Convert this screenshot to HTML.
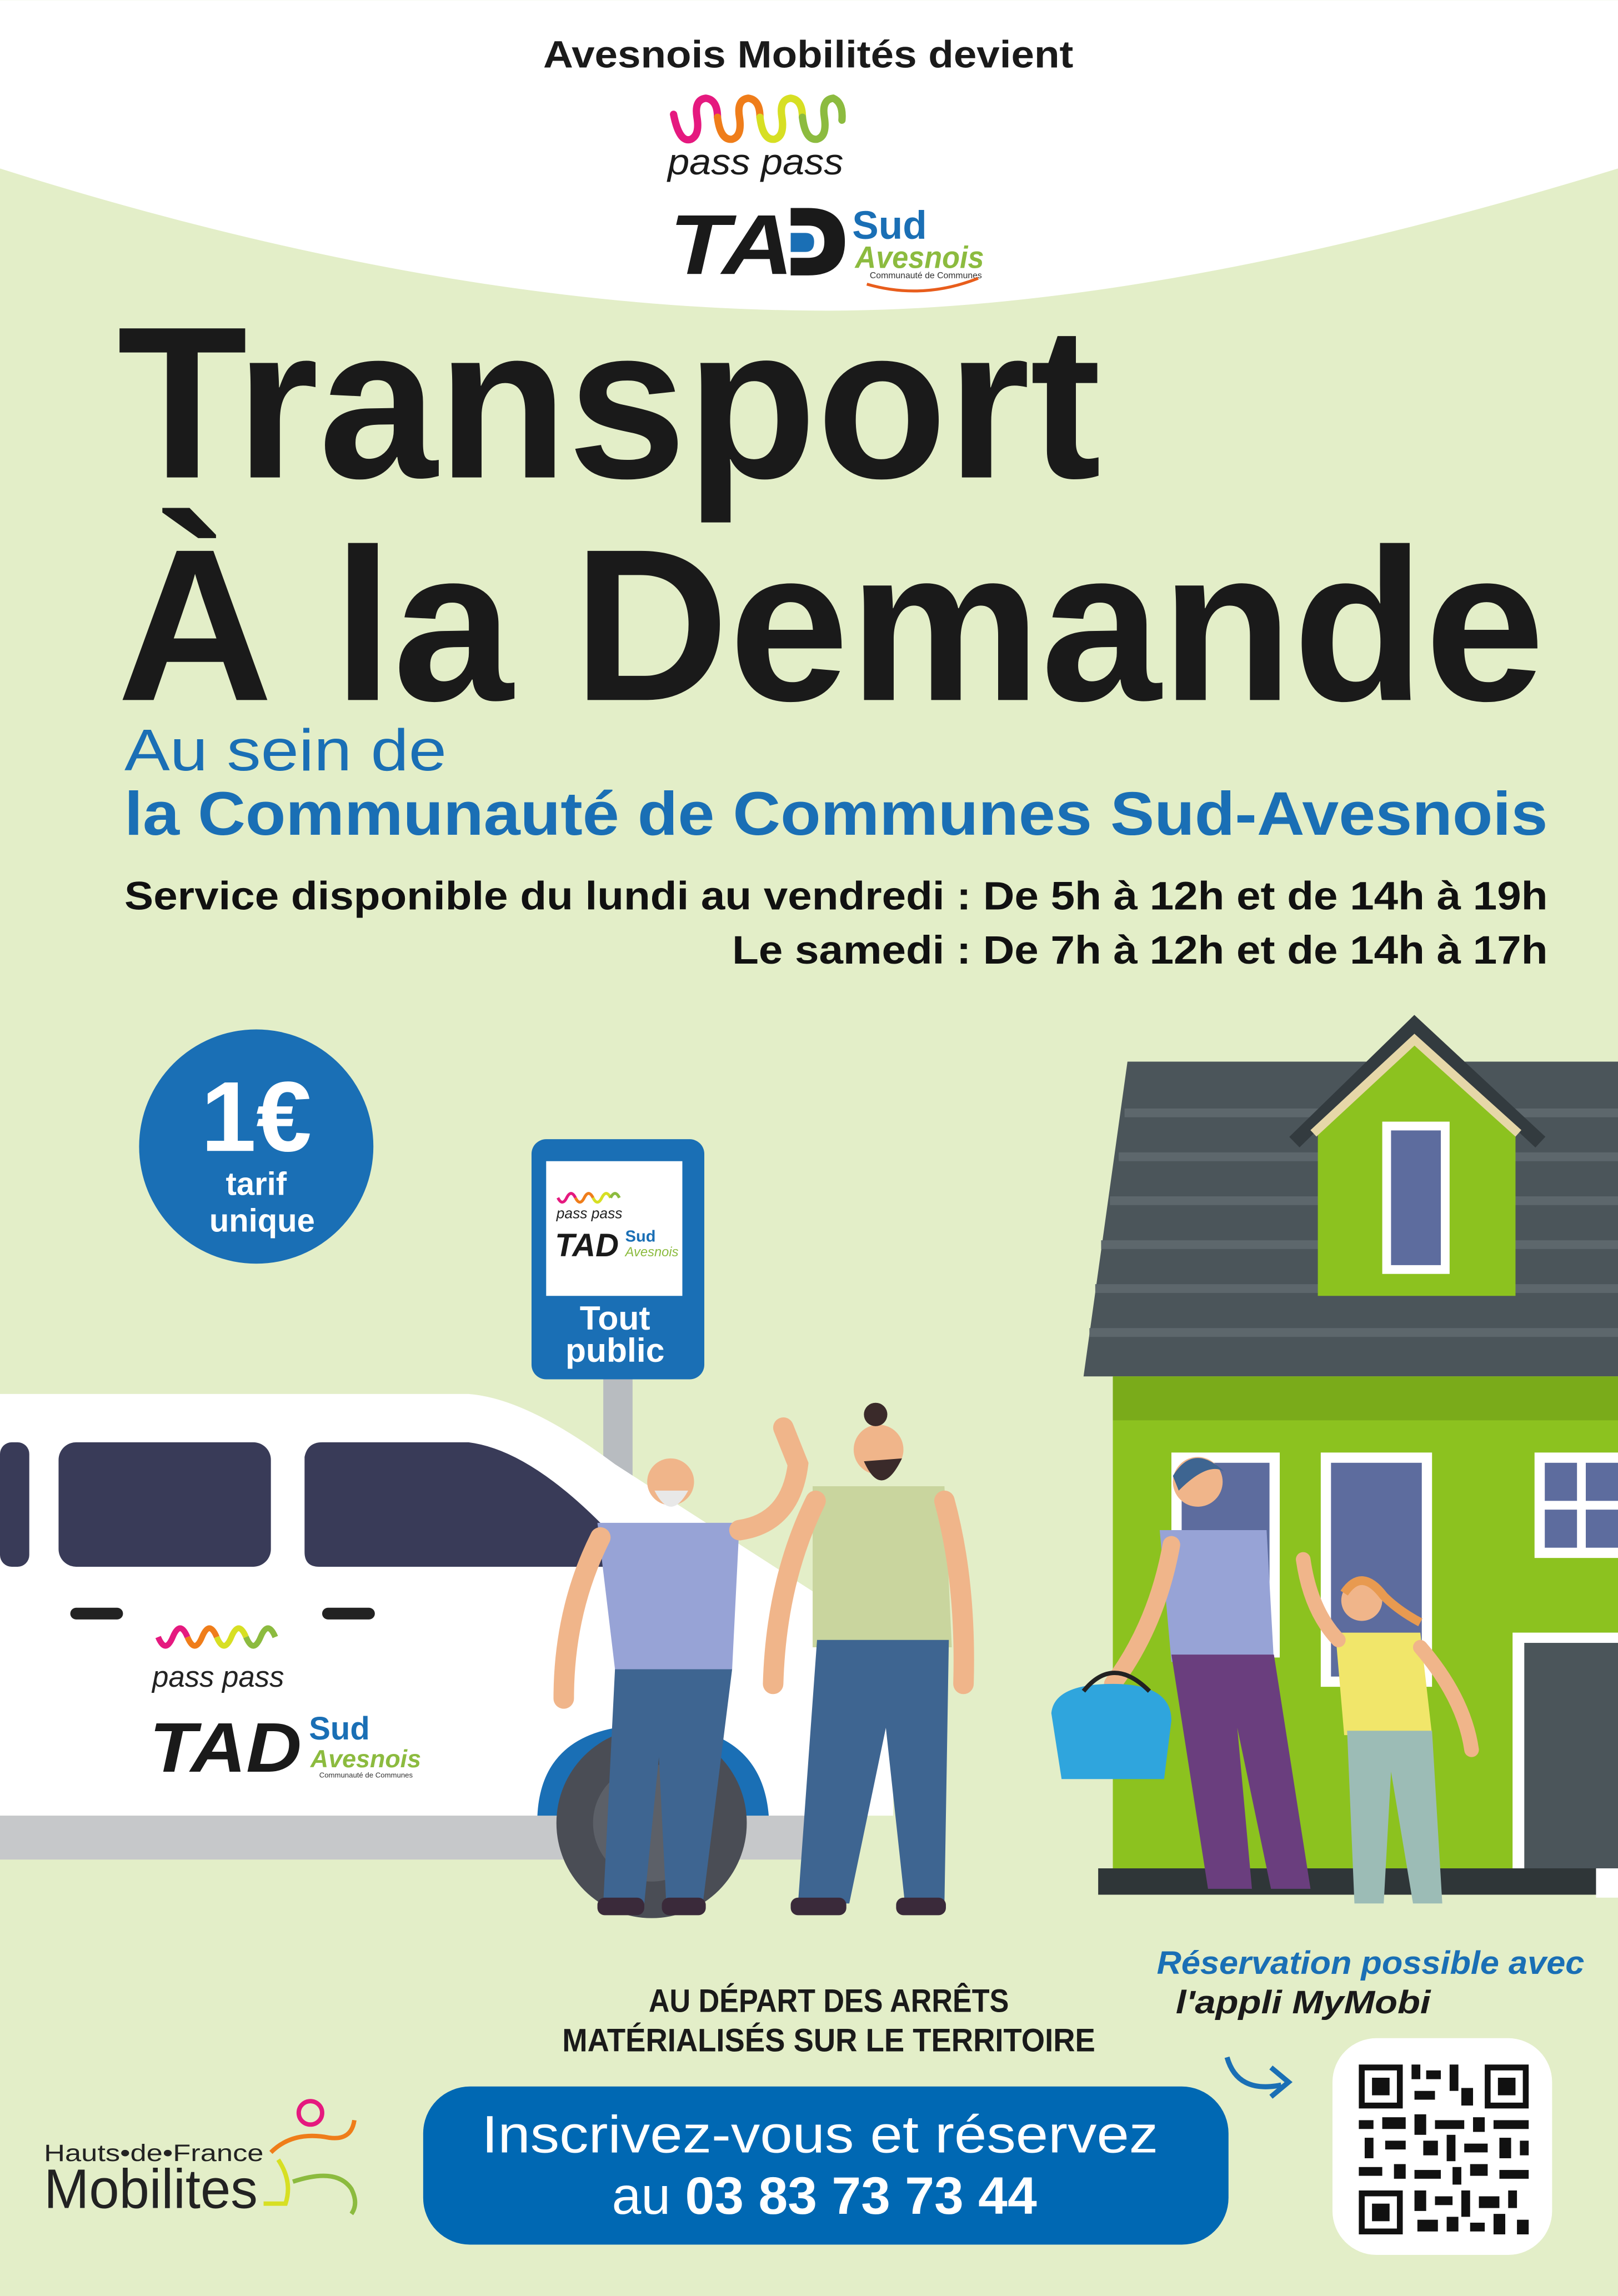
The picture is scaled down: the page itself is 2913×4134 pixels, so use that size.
<!DOCTYPE html>
<html><head><meta charset="utf-8">
<style>
html,body{margin:0;padding:0;background:#e3eec8;}
svg{display:block;}
text{font-family:"Liberation Sans",sans-serif;}
</style></head>
<body>
<svg width="2913" height="4134" viewBox="0 0 1105 1568" xmlns="http://www.w3.org/2000/svg">
<rect width="1105" height="1568" fill="#e3eec8"/>
<path d="M0 0H1105V115Q780 215 552 212Q300 210 0 115Z" fill="#fff"/>
<text x="552" y="46" font-size="26" font-weight="bold" text-anchor="middle" fill="#1a1a1a" textLength="362" lengthAdjust="spacingAndGlyphs">Avesnois Mobilités devient</text>
<g fill="none" stroke-width="5" stroke-linecap="round">
<path d="M460 78 Q464 98 472 95 Q478 92 476 80 Q474 68 482 67 Q490 68 490 80" stroke="#e5197f"/>
<path d="M490 80 Q492 96 500 95 Q507 93 505 80 Q503 68 511 67 Q519 68 519 80" stroke="#ef7d1a"/>
<path d="M519 80 Q521 96 529 95 Q536 93 534 80 Q532 68 540 67 Q548 68 548 80" stroke="#d7df23"/>
<path d="M548 80 Q550 96 558 95 Q565 93 563 80 Q561 68 569 67 Q576 70 575 82" stroke="#8cbb3f"/>
</g>
<text x="456" y="119" font-size="25" font-style="italic" fill="#1a1a1a" textLength="120" lengthAdjust="spacingAndGlyphs">pass pass</text>
<text x="457" y="187" font-size="58" font-weight="bold" font-style="italic" fill="#1a1a1a" textLength="85" lengthAdjust="spacingAndGlyphs">TA</text>
<path d="M540 142 H552 Q577 142 577 165 Q577 188 552 188 H540 V176 H552 Q563 176 563 165 Q563 154 552 154 H540Z" fill="#1a1a1a"/>
<path d="M540 159 H550 Q556 159 556 165 Q556 172 550 172 H540Z" fill="#1a6fb5"/>
<text x="582" y="163" font-size="27" font-weight="bold" fill="#1a6fb5">Sud</text>
<text x="584" y="183" font-size="21" font-weight="bold" font-style="italic" fill="#8cbb3f" textLength="88" lengthAdjust="spacingAndGlyphs">Avesnois</text>
<text x="594" y="190" font-size="6" fill="#333">Communauté de Communes</text>
<path d="M592 194 Q630 205 668 190" stroke="#e85d1c" stroke-width="2" fill="none"/>
<text x="80" y="326" font-size="148" font-weight="bold" fill="#1a1a1a" textLength="672" lengthAdjust="spacingAndGlyphs">Transport</text>
<text x="80" y="478" font-size="148" font-weight="bold" fill="#1a1a1a" textLength="975" lengthAdjust="spacingAndGlyphs">À la Demande</text>
<text x="85" y="526" font-size="40" fill="#1a6fb5" textLength="220" lengthAdjust="spacingAndGlyphs">Au sein de</text>
<text x="85" y="570" font-size="42" font-weight="bold" fill="#1a6fb5" textLength="972" lengthAdjust="spacingAndGlyphs">la Communauté de Communes Sud-Avesnois</text>
<text x="1057" y="621" font-size="27" font-weight="bold" fill="#111" text-anchor="end" textLength="972" lengthAdjust="spacingAndGlyphs">Service disponible du lundi au vendredi : De 5h à 12h et de 14h à 19h</text>
<text x="1057" y="658" font-size="27" font-weight="bold" fill="#111" text-anchor="end" textLength="557" lengthAdjust="spacingAndGlyphs">Le samedi : De 7h à 12h et de 14h à 17h</text>
<circle cx="175" cy="783" r="80" fill="#1a6fb5"/>
<text x="175" y="786" font-size="68" font-weight="bold" fill="#fff" text-anchor="middle">1€</text>
<text x="175" y="816" font-size="22" font-weight="bold" fill="#fff" text-anchor="middle">tarif</text>
<text x="179" y="841" font-size="22" font-weight="bold" fill="#fff" text-anchor="middle">unique</text>
<rect x="412" y="935" width="20" height="85" fill="#b8bcc0"/>
<rect x="363" y="778" width="118" height="164" rx="10" fill="#1a6fb5"/>
<rect x="373" y="793" width="93" height="92" fill="#fff"/>
<text x="380" y="832" font-size="10" font-style="italic" fill="#222">pass pass</text>
<g fill="none" stroke-width="2"><path d="M381 818 q3 6 6 0 q3 -6 6 0" stroke="#e5197f"/><path d="M393 818 q3 6 6 0 q3 -6 6 0" stroke="#ef7d1a"/><path d="M405 818 q3 6 6 0 q3 -6 6 0" stroke="#d7df23"/><path d="M417 818 q3 -6 6 0" stroke="#8cbb3f"/></g>
<text x="379" y="858" font-size="22" font-weight="bold" font-style="italic" fill="#1a1a1a">TAD</text>
<text x="427" y="848" font-size="11" font-weight="bold" fill="#1a6fb5">Sud</text>
<text x="427" y="858" font-size="9" font-style="italic" fill="#8cbb3f">Avesnois</text>
<text x="420" y="908" font-size="23" font-weight="bold" fill="#fff" text-anchor="middle">Tout</text>
<text x="420" y="930" font-size="23" font-weight="bold" fill="#fff" text-anchor="middle">public</text>
<path d="M0 952 H320 Q360 955 420 1000 L560 1090 Q610 1120 610 1180 V1240 H0Z" fill="#fff"/>
<rect x="0" y="1240" width="570" height="30" fill="#c6c8ca"/>
<path d="M367 1240 Q370 1178 445 1178 Q520 1178 525 1240Z" fill="#1a6fb5"/>
<circle cx="445" cy="1245" r="65" fill="#4a4d55"/>
<circle cx="445" cy="1245" r="40" fill="#5c6068"/>
<rect x="0" y="985" width="20" height="85" rx="8" fill="#393b58"/>
<rect x="40" y="985" width="145" height="85" rx="12" fill="#393b58"/>
<path d="M220 985 H320 Q360 990 410 1040 L430 1070 H218 Q208 1070 208 1060 V995 Q210 985 220 985Z" fill="#393b58"/>
<rect x="48" y="1098" width="36" height="8" rx="4" fill="#222"/>
<rect x="220" y="1098" width="36" height="8" rx="4" fill="#222"/>
<g fill="none" stroke-width="4"><path d="M108 1118 q5 12 10 0 q5 -12 10 0" stroke="#e5197f"/><path d="M128 1118 q5 12 10 0 q5 -12 10 0" stroke="#ef7d1a"/><path d="M148 1118 q5 12 10 0 q5 -12 10 0" stroke="#d7df23"/><path d="M168 1118 q5 12 10 0 q5 -12 10 0" stroke="#8cbb3f"/></g>
<text x="104" y="1152" font-size="20" font-style="italic" fill="#222">pass pass</text>
<text x="102" y="1210" font-size="48" font-weight="bold" font-style="italic" fill="#1a1a1a" textLength="104" lengthAdjust="spacingAndGlyphs">TAD</text>
<text x="211" y="1188" font-size="22" font-weight="bold" fill="#1a6fb5">Sud</text>
<text x="212" y="1207" font-size="17" font-style="italic" font-weight="bold" fill="#8cbb3f">Avesnois</text>
<text x="218" y="1214" font-size="5" fill="#333">Communauté de Communes</text>
<path d="M770 725 H1105 V940 H740Z" fill="#4b555a"/>
<g stroke="#5d676c" stroke-width="6"><line x1="768" y1="760" x2="1105" y2="760"/><line x1="764" y1="790" x2="1105" y2="790"/><line x1="758" y1="820" x2="1105" y2="820"/><line x1="752" y1="850" x2="1105" y2="850"/><line x1="748" y1="880" x2="1105" y2="880"/><line x1="744" y1="910" x2="1105" y2="910"/></g>
<rect x="760" y="940" width="345" height="350" fill="#8cc21f"/>
<rect x="760" y="940" width="345" height="30" fill="#7aab1a"/>
<path d="M900 775 L966 712 L1035 775 V885 H900Z" fill="#8cc21f"/>
<path d="M884 780 L966 700 L1052 780" stroke="#333b3f" stroke-width="10" fill="none"/>
<path d="M897 774 L966 710 L1037 774" stroke="#e6d7a8" stroke-width="6" fill="none"/>
<rect x="944" y="766" width="46" height="104" fill="#fff"/>
<rect x="950" y="772" width="34" height="92" fill="#5d6c9e"/>
<rect x="800" y="992" width="74" height="140" fill="#fff"/><rect x="807" y="999" width="60" height="126" fill="#5d6c9e"/>
<rect x="902" y="992" width="76" height="160" fill="#fff"/><rect x="909" y="999" width="62" height="146" fill="#5d6c9e"/>
<rect x="1048" y="992" width="57" height="72" fill="#fff"/><rect x="1055" y="999" width="22" height="26" fill="#5d6c9e"/><rect x="1083" y="999" width="22" height="26" fill="#5d6c9e"/><rect x="1055" y="1031" width="22" height="26" fill="#5d6c9e"/><rect x="1083" y="1031" width="22" height="26" fill="#5d6c9e"/>
<rect x="1033" y="1115" width="72" height="175" fill="#fff"/><rect x="1041" y="1122" width="64" height="168" fill="#4b555a"/>
<rect x="750" y="1276" width="355" height="18" fill="#2f3638"/>
<rect x="1090" y="1276" width="15" height="20" fill="#fff"/>
<circle cx="458" cy="1012" r="16" fill="#f0b58a"/>
<path d="M447 1018 Q458 1040 470 1018Z" fill="#e8e8e8"/>
<path d="M408 1040 H505 L500 1140 H420Z" fill="#97a3d6"/>
<path d="M505 1045 Q540 1040 545 1000 L535 975" stroke="#f0b58a" stroke-width="14" fill="none" stroke-linecap="round"/>
<path d="M410 1050 Q385 1100 385 1160" stroke="#f0b58a" stroke-width="14" fill="none" stroke-linecap="round"/>
<path d="M420 1140 H500 L480 1300 H455 L450 1200 L440 1300 H412Z" fill="#3e6591"/>
<rect x="408" y="1296" width="32" height="12" rx="5" fill="#3a2a3a"/><rect x="452" y="1296" width="30" height="12" rx="5" fill="#3a2a3a"/>
<circle cx="600" cy="990" r="17" fill="#f0b58a"/>
<path d="M590 998 Q602 1025 616 996Z" fill="#3a2a2a"/>
<circle cx="598" cy="966" r="8" fill="#3a2a2a"/>
<path d="M555 1015 H645 L650 1125 H555Z" fill="#c9d59e"/>
<path d="M557 1025 Q530 1080 528 1150" stroke="#f0b58a" stroke-width="14" fill="none" stroke-linecap="round"/>
<path d="M645 1025 Q660 1080 658 1150" stroke="#f0b58a" stroke-width="14" fill="none" stroke-linecap="round"/>
<path d="M558 1120 H648 L645 1300 H618 L605 1180 L580 1300 H545Z" fill="#3e6591"/>
<rect x="540" y="1296" width="38" height="12" rx="5" fill="#3a2a3a"/><rect x="612" y="1296" width="34" height="12" rx="5" fill="#3a2a3a"/>
<circle cx="818" cy="1012" r="17" fill="#f0b58a"/>
<path d="M801 1008 Q815 985 836 1005 Q825 998 805 1018Z" fill="#3e6591"/>
<path d="M792 1045 H865 L870 1135 H800Z" fill="#97a3d6"/>
<path d="M800 1130 H870 L895 1290 H868 L845 1180 L855 1290 H825Z" fill="#6a3e7e"/>
<path d="M800 1055 Q790 1110 760 1150" stroke="#f0b58a" stroke-width="12" fill="none" stroke-linecap="round"/>
<path d="M718 1170 Q720 1150 760 1150 Q800 1150 800 1175 L795 1215 H725Z" fill="#2fa5dd"/>
<path d="M740 1155 Q760 1130 785 1155" stroke="#222" stroke-width="3" fill="none"/>
<circle cx="930" cy="1093" r="14" fill="#f0b58a"/>
<path d="M918 1088 Q930 1070 945 1090 Q955 1100 970 1108" stroke="#e89a50" stroke-width="6" fill="none"/>
<path d="M912 1115 H970 L978 1185 H918Z" fill="#f1e66a"/>
<path d="M914 1120 Q895 1100 890 1065" stroke="#f0b58a" stroke-width="10" fill="none" stroke-linecap="round"/>
<path d="M970 1125 Q1000 1160 1005 1195" stroke="#f0b58a" stroke-width="10" fill="none" stroke-linecap="round"/>
<path d="M920 1182 H978 L985 1300 H965 L950 1210 L945 1300 H925Z" fill="#9cbcb6"/>
<text x="566" y="1374" font-size="22" font-weight="bold" fill="#1a1a1a" text-anchor="middle" textLength="246" lengthAdjust="spacingAndGlyphs">AU DÉPART DES ARRÊTS</text>
<text x="566" y="1401" font-size="22" font-weight="bold" fill="#1a1a1a" text-anchor="middle" textLength="364" lengthAdjust="spacingAndGlyphs">MATÉRIALISÉS SUR LE TERRITOIRE</text>
<text x="790" y="1348" font-size="22" font-weight="bold" font-style="italic" fill="#1a6fb5" textLength="292" lengthAdjust="spacingAndGlyphs">Réservation possible avec</text>
<text x="803" y="1375" font-size="22" font-weight="bold" font-style="italic" fill="#1a1a1a" textLength="174" lengthAdjust="spacingAndGlyphs">l'appli MyMobi</text>
<path d="M838 1405 Q845 1430 875 1424" stroke="#1a6fb5" stroke-width="3.5" fill="none"/>
<path d="M868 1412 L880 1422 L868 1432" stroke="#1a6fb5" stroke-width="3.5" fill="none"/>
<rect x="289" y="1425" width="550" height="108" rx="32" fill="#0068b3"/>
<text x="560" y="1470" font-size="36" fill="#fff" text-anchor="middle" textLength="462" lengthAdjust="spacingAndGlyphs">Inscrivez-vous et réservez</text>
<text x="563" y="1512" font-size="36" fill="#fff" text-anchor="middle"><tspan>au </tspan><tspan font-weight="bold">03 83 73 73 44</tspan></text>
<rect x="910" y="1392" width="150" height="148" rx="30" fill="#fff"/>
<g fill="#111">
<rect x="928" y="1410" width="30" height="30"/><rect x="1014" y="1410" width="30" height="30"/><rect x="928" y="1496" width="30" height="30"/>
</g>
<g fill="#fff"><rect x="932" y="1414" width="22" height="22"/><rect x="1018" y="1414" width="22" height="22"/><rect x="932" y="1500" width="22" height="22"/></g>
<g fill="#111"><rect x="937" y="1419" width="12" height="12"/><rect x="1023" y="1419" width="12" height="12"/><rect x="937" y="1505" width="12" height="12"/>
<rect x="964" y="1410" width="6" height="10"/><rect x="974" y="1414" width="10" height="6"/><rect x="990" y="1410" width="6" height="18"/><rect x="966" y="1428" width="14" height="6"/><rect x="998" y="1426" width="8" height="12"/>
<rect x="928" y="1448" width="10" height="6"/><rect x="944" y="1446" width="16" height="8"/><rect x="966" y="1444" width="8" height="14"/><rect x="980" y="1448" width="20" height="6"/><rect x="1006" y="1446" width="8" height="10"/><rect x="1020" y="1448" width="24" height="6"/>
<rect x="932" y="1460" width="6" height="14"/><rect x="946" y="1462" width="14" height="6"/><rect x="972" y="1462" width="10" height="10"/><rect x="988" y="1458" width="6" height="18"/><rect x="1000" y="1464" width="16" height="6"/><rect x="1024" y="1460" width="8" height="14"/><rect x="1038" y="1462" width="6" height="10"/>
<rect x="928" y="1480" width="16" height="6"/><rect x="952" y="1478" width="8" height="10"/><rect x="966" y="1482" width="18" height="6"/><rect x="992" y="1480" width="6" height="12"/><rect x="1004" y="1478" width="12" height="8"/><rect x="1024" y="1482" width="20" height="6"/>
<rect x="966" y="1496" width="8" height="14"/><rect x="980" y="1500" width="12" height="6"/><rect x="998" y="1496" width="6" height="18"/><rect x="1010" y="1500" width="14" height="8"/><rect x="1030" y="1496" width="6" height="12"/>
<rect x="968" y="1516" width="14" height="8"/><rect x="988" y="1514" width="8" height="10"/><rect x="1004" y="1518" width="10" height="6"/><rect x="1020" y="1512" width="8" height="14"/><rect x="1036" y="1516" width="8" height="10"/>
</g>
<text x="30" y="1476" font-size="16" fill="#222" textLength="150" lengthAdjust="spacingAndGlyphs">Hauts•de•France</text>
<text x="30" y="1508" font-size="38" fill="#222" textLength="146" lengthAdjust="spacingAndGlyphs">Mobilites</text>
<circle cx="212" cy="1443" r="8" fill="none" stroke="#e5197f" stroke-width="3"/>
<path d="M185 1470 Q200 1455 225 1460 Q240 1462 242 1448" stroke="#ef7d1a" stroke-width="3" fill="none"/>
<path d="M190 1475 Q200 1490 195 1505 Q190 1505 180 1505" stroke="#d7df23" stroke-width="3" fill="none"/>
<path d="M200 1490 Q230 1480 240 1495 Q245 1505 240 1512" stroke="#8cbb3f" stroke-width="3" fill="none"/>
</svg>
</body></html>
